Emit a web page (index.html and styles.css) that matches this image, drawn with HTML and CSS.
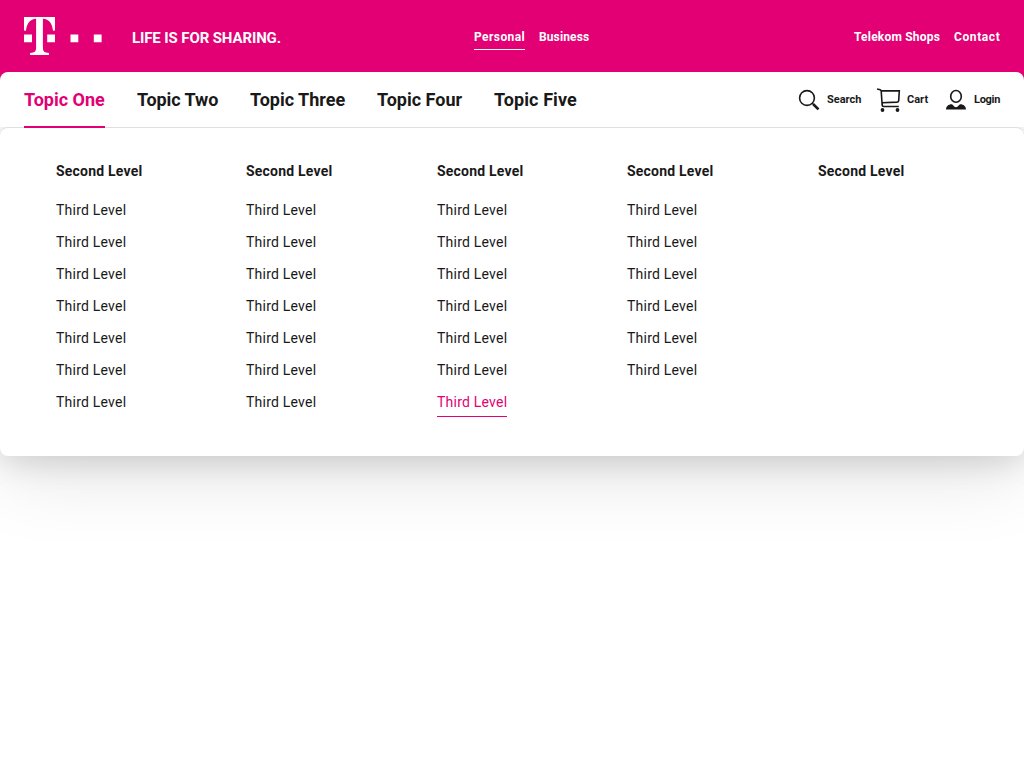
FILE: index.html
```html
<!DOCTYPE html>
<html lang="en">
<head>
<meta charset="utf-8">
<title>Telekom</title>
<link rel="stylesheet" href="styles.css">
</head>
<body>
<header class="header">
  <div class="brand-bar">
    <div class="brand">
      <svg class="logo" width="78" height="38" viewBox="0 0 78 38" fill="#fff" aria-label="Telekom">
        <path d="M0 0H31V13.5L29 13.7C28.2 6.5 25 2 18.9 1.8V30.5C18.9 34.5 20.5 35.7 25 36V38H6V36C10.5 35.7 12.1 34.5 12.1 30.5V1.8C6 2 2.8 6.5 2 13.7L0 13.5Z"/>
        <path d="M0 17.5H8V25.3H0ZM23.2 17.5H31V25.3H23.2ZM46.5 17.5H54.3V25.3H46.5ZM69.8 17.5H77.6V25.3H69.8Z"/>
      </svg>
      <span class="slogan">LIFE IS FOR SHARING.</span>
    </div>
    <nav class="portal-nav">
      <a class="meta-link personal active">Personal</a>
      <a class="meta-link business">Business</a>
    </nav>
    <nav class="meta-nav">
      <a class="meta-link shops">Telekom Shops</a>
      <a class="meta-link contact">Contact</a>
    </nav>
  </div>
  <div class="main-bar">
    <nav class="topics">
      <a class="topic one active">Topic One</a>
      <a class="topic two">Topic Two</a>
      <a class="topic three">Topic Three</a>
      <a class="topic four">Topic Four</a>
      <a class="topic five">Topic Five</a>
    </nav>
    <div class="actions">
      <a class="action search"><svg width="24" height="24" viewBox="0 0 24 24" fill="none" stroke="#191919"><circle cx="10" cy="10" r="7.4" stroke-width="1.6"/><path d="M15.3 15.3L17 17" stroke-width="1.6"/><path d="M16.3 16.3L21.5 21.4" stroke-width="2.6"/></svg><span>Search</span></a>
      <a class="action cart"><svg width="24" height="24" viewBox="0 0 24 24" fill="none" stroke="#191919" stroke-width="1.6"><path d="M0 .9L3.2 1.8Q4 2.1 4.2 3L5.2 17.8M4.4 2.9H22.3L21.7 12.6Q21.6 14 20.2 14.1L5.2 14.8M5.2 14.8V17Q5.2 18.5 6.8 18.5H21.8"/><circle cx="5.5" cy="22" r="1.9" fill="#191919" stroke="none"/><circle cx="20.5" cy="22" r="1.9" fill="#191919" stroke="none"/></svg><span>Cart</span></a>
      <a class="action login"><svg width="24" height="24" viewBox="0 0 24 24" fill="none"><ellipse cx="12" cy="8.4" rx="5.3" ry="5.9" stroke="#191919" stroke-width="1.6"/><path d="M2 21.6C2 18.4 4.5 16.3 7.6 16.3C9.2 16.3 9.7 19.3 12 19.3S14.8 16.3 16.4 16.3C19.5 16.3 22 18.4 22 21.6Z" fill="#191919"/></svg><span>Login</span></a>
    </div>
  </div>
</header>
<section class="mega-menu">
  <div class="column"><h2>Second Level</h2><a>Third Level</a><a>Third Level</a><a>Third Level</a><a>Third Level</a><a>Third Level</a><a>Third Level</a><a>Third Level</a></div>
  <div class="column"><h2>Second Level</h2><a>Third Level</a><a>Third Level</a><a>Third Level</a><a>Third Level</a><a>Third Level</a><a>Third Level</a><a>Third Level</a></div>
  <div class="column"><h2>Second Level</h2><a>Third Level</a><a>Third Level</a><a>Third Level</a><a>Third Level</a><a>Third Level</a><a>Third Level</a><a class="active">Third Level</a></div>
  <div class="column"><h2>Second Level</h2><a>Third Level</a><a>Third Level</a><a>Third Level</a><a>Third Level</a><a>Third Level</a><a>Third Level</a></div>
  <div class="column"><h2>Second Level</h2></div>
</section>
</body>
</html>
```
FILE: styles.css
```css
* { box-sizing: border-box; }
body {
  margin: 0;
  height: 768px;
  overflow: hidden;
  background: #fff;
  color: #191919;
  font-family: Roboto, "Liberation Sans", sans-serif;
  white-space: nowrap;
}
.header { height: 127px; background: #e20074; }
.brand-bar {
  height: 72px;
  padding: 0 24px;
  display: grid;
  grid-template-columns: 450px 1fr auto;
  color: #fff;
}
.brand { display: flex; align-items: flex-start; gap: 30px; padding-top: 17px; }
.slogan { font-size: 15px; font-weight: 700; line-height: 20px; margin-top: 11px; letter-spacing: -0.12px; }
.portal-nav, .meta-nav { display: flex; align-items: flex-start; gap: 14px; padding-top: 24px; }
.meta-link { height: 26px; font-size: 12px; font-weight: 700; line-height: 27px; }
.meta-link.active { border-bottom: 1px solid #fff; }
.personal { width: 51px; letter-spacing: .42px; }
.business { width: 50px; letter-spacing: .12px; }
.shops { width: 86px; letter-spacing: .2px; }
.contact { width: 46px; letter-spacing: .6px; }
.main-bar {
  height: 56px;
  padding: 0 24px;
  display: flex;
  justify-content: space-between;
  background: #fff;
  border-radius: 8px 8px 0 0;
}
.topics { display: flex; gap: 32px; }
.topic { height: 56px; font-size: 18px; font-weight: 700; line-height: 56px; position: relative; z-index: 2; }
.topic.active { color: #e20074; border-bottom: 2px solid #e20074; }
.one, .two { width: 81px; }
.two { letter-spacing: -.1px; }
.three { width: 95px; }
.four { width: 85px; }
.five { width: 83px; letter-spacing: .1px; }
.actions { display: flex; height: 56px; align-items: center; gap: 16px; }
.action { display: flex; align-items: center; gap: 6px; font-size: 11px; font-weight: 700; line-height: 16px; }
.action svg { flex: none; }
.search { width: 64px; }
.cart { width: 51px; }
.login { width: 56px; letter-spacing: -.3px; }
.mega-menu {
  height: 329px;
  padding: 32px 16px 0 56px;
  display: grid;
  grid-template-columns: 190px 191px 190px 191px 190px;
  align-items: start;
  position: relative;
  z-index: 1;
  background: #fff;
  border-top: 1px solid #dfdfdf;
  border-radius: 8px;
  box-shadow: 0 4px 32px rgba(0, 0, 0, .15), 0 16px 80px rgba(0, 0, 0, .12);
  clip-path: inset(0 0 -200px);
}
.column { display: flex; flex-direction: column; align-items: flex-start; gap: 8px; }
.column h2 { margin: 0 0 8px; font-size: 14px; font-weight: 700; line-height: 22px; letter-spacing: .2px; }
.column a { height: 24px; font-size: 14px; line-height: 24px; letter-spacing: .22px; }
.column .active { height: 27px; color: #e20074; border-bottom: 1px solid #e20074; }
```
